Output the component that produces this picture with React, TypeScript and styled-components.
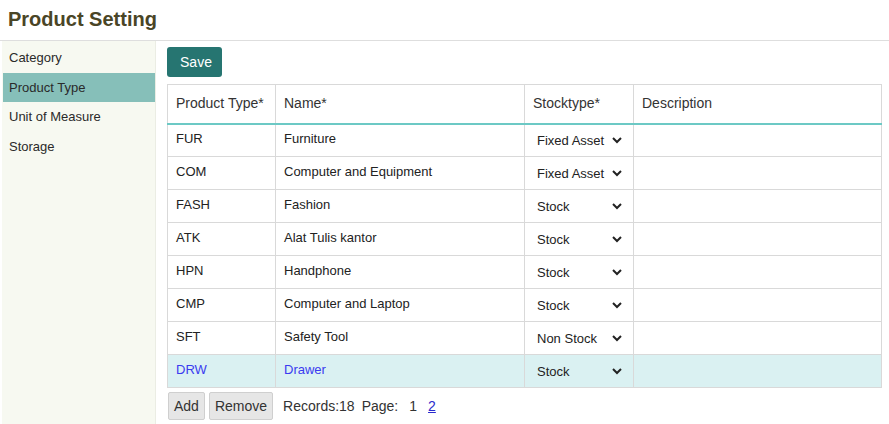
import styled, { createGlobalStyle } from "styled-components";

const GlobalStyle = createGlobalStyle`
	html, body {
		margin: 0;
		padding: 0;
		background: #fff;
		font-family: "Liberation Sans", Arial, sans-serif;
		color: #222;
	}
	* { box-sizing: border-box; }
`;

type IRow = {
	code: string;
	name: string;
	stock: string;
	description: string;
};

const rows: IRow[] = [
	{ code: "FUR", name: "Furniture", stock: "Fixed Asset", description: "" },
	{ code: "COM", name: "Computer and Equipment", stock: "Fixed Asset", description: "" },
	{ code: "FASH", name: "Fashion", stock: "Stock", description: "" },
	{ code: "ATK", name: "Alat Tulis kantor", stock: "Stock", description: "" },
	{ code: "HPN", name: "Handphone", stock: "Stock", description: "" },
	{ code: "CMP", name: "Computer and Laptop", stock: "Stock", description: "" },
	{ code: "SFT", name: "Safety Tool", stock: "Non Stock", description: "" },
	{ code: "DRW", name: "Drawer", stock: "Stock", description: "" },
];

const menu = ["Category", "Product Type", "Unit of Measure", "Storage"];
const stockTypes = ["Fixed Asset", "Stock", "Non Stock"];

export default function App() {
	const selected = "DRW";
	return (
		<>
			<GlobalStyle />
			<Page>
				<Title>Product Setting</Title>
				<Main>
					<Sidebar>
						{menu.map((item) => (
							<MenuItem key={item} $active={item === "Product Type"}>
								{item}
							</MenuItem>
						))}
					</Sidebar>
					<Content>
						<SaveButton>Save</SaveButton>
						<Table>
							<colgroup>
								<col style={{ width: 108 }} />
								<col style={{ width: 249 }} />
								<col style={{ width: 109 }} />
								<col />
							</colgroup>
							<thead>
								<tr>
									<HeadCell>Product Type*</HeadCell>
									<HeadCell>Name*</HeadCell>
									<HeadCell>Stocktype*</HeadCell>
									<HeadCell>Description</HeadCell>
								</tr>
							</thead>
							<tbody>
								{rows.map((row) => (
									<Row key={row.code} $selected={row.code === selected}>
										<Cell>{row.code}</Cell>
										<Cell>{row.name}</Cell>
										<SelectCell>
											<StockSelect defaultValue={row.stock}>
												{stockTypes.map((t) => (
													<option key={t}>{t}</option>
												))}
											</StockSelect>
										</SelectCell>
										<Cell>{row.description}</Cell>
									</Row>
								))}
							</tbody>
						</Table>
						<Footer>
							<GreyButton>Add</GreyButton>
							<GreyButton>Remove</GreyButton>
							<Records>Records:18</Records>
							<PageLabel>Page:</PageLabel>
							<PageNumber>1</PageNumber>
							<PageLink href="#">2</PageLink>
						</Footer>
					</Content>
				</Main>
			</Page>
		</>
	);
}

const Page = styled.div`
	width: 889px;
	height: 424px;
	display: flex;
	flex-direction: column;
	overflow: hidden;
`;

const Title = styled.h1`
	margin: 0;
	height: 41px;
	padding: 8px 0 0 8px;
	font-size: 20px;
	font-weight: 700;
	color: #4a4526;
	border-bottom: 1px solid #dedede;
`;

const Main = styled.div`
	flex: 1;
	display: flex;
`;

const Sidebar = styled.nav`
	width: 154px;
	margin-left: 2px;
	padding: 2px 0 0 1px;
	background: #f7f9f1;
	border-right: 1px solid #ebede4;
	display: flex;
	flex-direction: column;
`;

const MenuItem = styled.div<{ $active?: boolean }>`
	height: 29px;
	line-height: 29px;
	padding-left: 6px;
	font-size: 13px;
	color: #2a2a2a;
	background: ${({ $active }) => ($active ? "#86bfb9" : "transparent")};
	&:first-child {
		height: 30px;
	}
	&:last-child {
		line-height: 31px;
	}
`;

const Content = styled.div`
	flex: 1;
	padding: 6px 7px 0 11px;
`;

const SaveButton = styled.button`
	width: 55px;
	height: 30px;
	border: none;
	border-radius: 3px;
	background: #267571;
	color: #fff;
	font-family: "Liberation Sans", Arial, sans-serif;
	font-size: 14px;
	padding: 0 0 0 3px;
	cursor: pointer;
`;

const Table = styled.table`
	margin-top: 7px;
	width: 715px;
	border-collapse: collapse;
	table-layout: fixed;
	border: 1px solid #d9d9d9;
`;

const HeadCell = styled.th`
	height: 39px;
	padding: 0 0 2px 8px;
	text-align: left;
	font-weight: 400;
	font-size: 14px;
	color: #333;
	border-left: 1px solid #d9d9d9;
	border-bottom: 2px solid #6cc9c5;
`;

const Row = styled.tr<{ $selected?: boolean }>`
	height: 33px;
	background: ${({ $selected }) => ($selected ? "#daf1f2" : "#fff")};
	color: ${({ $selected }) => ($selected ? "#3b3bf0" : "#222")};
	border-bottom: 1px solid #d9d9d9;
`;

const Cell = styled.td`
	padding: 0 0 4px 8px;
	font-size: 13px;
	border-left: 1px solid #d9d9d9;
	white-space: nowrap;
`;

const SelectCell = styled.td`
	padding: 0 0 0 8px;
	border-left: 1px solid #d9d9d9;
`;

const StockSelect = styled.select`
	width: 92px;
	height: 22px;
	border: none;
	background: transparent;
	font-family: "Liberation Sans", Arial, sans-serif;
	font-size: 13px;
	color: #222;
	outline: none;
`;

const Footer = styled.div`
	margin-top: 4px;
	display: flex;
	align-items: center;
	gap: 4px;
	padding-left: 1px;
`;

const GreyButton = styled.button`
	height: 28px;
	padding: 0 5px;
	border: 1px solid #cfcfcf;
	border-radius: 2px;
	background: #e6e6e6;
	color: #333;
	font-family: "Liberation Sans", Arial, sans-serif;
	font-size: 14px;
`;

const Records = styled.span`
	font-size: 14px;
	color: #333;
	margin-left: 6px;
`;

const PageLabel = styled.span`
	font-size: 14px;
	color: #333;
	margin-left: 3px;
`;

const PageNumber = styled.span`
	font-size: 14px;
	color: #333;
	margin-left: 7px;
`;

const PageLink = styled.a`
	font-size: 14px;
	color: #2a2acc;
	text-decoration: underline;
	margin-left: 7px;
`;
